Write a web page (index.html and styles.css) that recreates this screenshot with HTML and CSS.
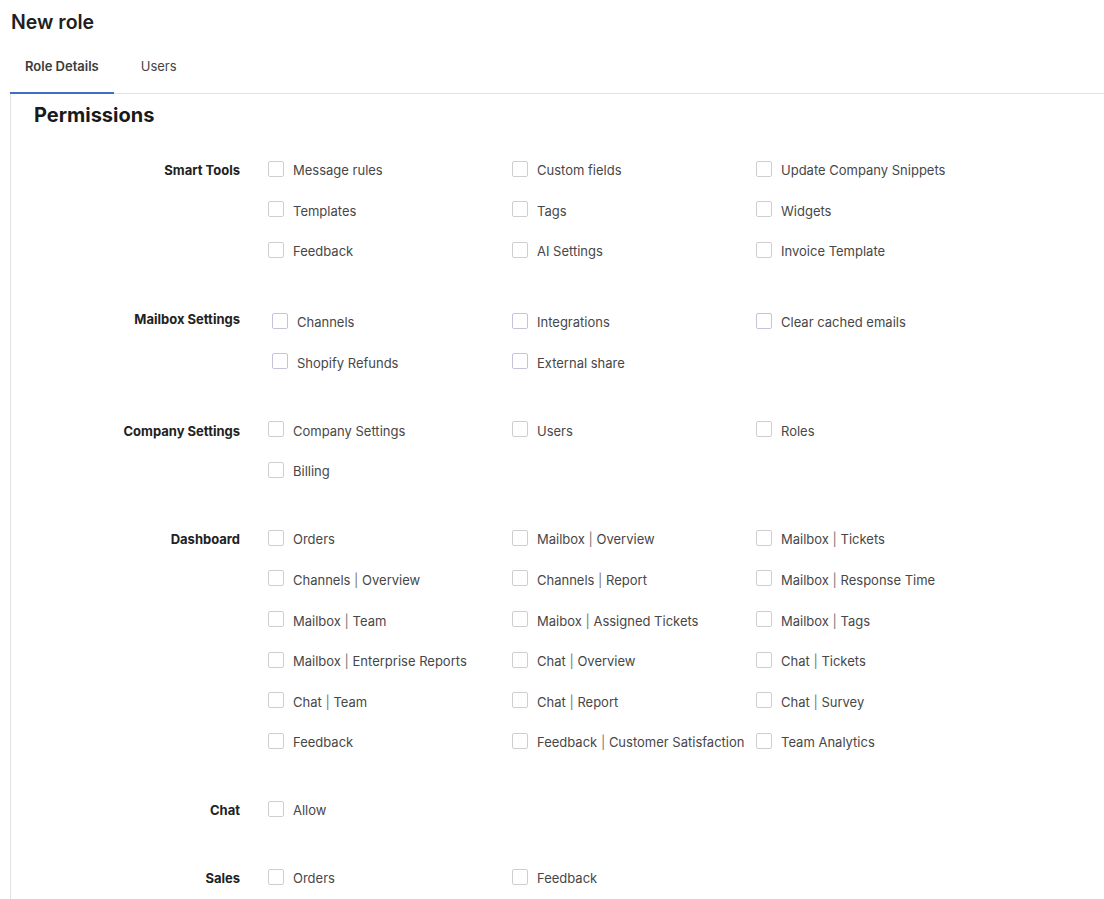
FILE: index.html
```html
<!DOCTYPE html>
<html>
<head>
<meta charset="utf-8">
<link rel="stylesheet" href="styles.css">
</head>
<body>
<h1 class="title">New role</h1>
<div class="tabs">
  <div class="tab active">Role Details</div>
  <div class="tab">Users</div>
</div>
<div class="content">
  <h2 class="section-title">Permissions</h2>
  <div class="groups">
    <div class="group">
      <div class="group-label">Smart Tools</div>
      <div class="options">
        <label class="opt"><span class="box"></span><span>Message rules</span></label>
        <label class="opt"><span class="box"></span><span>Custom fields</span></label>
        <label class="opt"><span class="box"></span><span>Update Company Snippets</span></label>
        <label class="opt"><span class="box"></span><span>Templates</span></label>
        <label class="opt"><span class="box"></span><span>Tags</span></label>
        <label class="opt"><span class="box"></span><span>Widgets</span></label>
        <label class="opt"><span class="box"></span><span>Feedback</span></label>
        <label class="opt"><span class="box"></span><span>AI Settings</span></label>
        <label class="opt"><span class="box"></span><span>Invoice Template</span></label>
      </div>
    </div>
    <div class="group group-legacy">
      <div class="group-label">Mailbox Settings</div>
      <div class="options">
        <label class="opt first"><span class="box"></span><span>Channels</span></label>
        <label class="opt"><span class="box"></span><span>Integrations</span></label>
        <label class="opt"><span class="box"></span><span>Clear cached emails</span></label>
        <label class="opt first"><span class="box"></span><span>Shopify Refunds</span></label>
        <label class="opt"><span class="box"></span><span>External share</span></label>
      </div>
    </div>
    <div class="group">
      <div class="group-label">Company Settings</div>
      <div class="options">
        <label class="opt"><span class="box"></span><span>Company Settings</span></label>
        <label class="opt"><span class="box"></span><span>Users</span></label>
        <label class="opt"><span class="box"></span><span>Roles</span></label>
        <label class="opt"><span class="box"></span><span>Billing</span></label>
      </div>
    </div>
    <div class="group">
      <div class="group-label">Dashboard</div>
      <div class="options">
        <label class="opt"><span class="box"></span><span>Orders</span></label>
        <label class="opt"><span class="box"></span><span>Mailbox <span class="sep">|</span> Overview</span></label>
        <label class="opt"><span class="box"></span><span>Mailbox <span class="sep">|</span> Tickets</span></label>
        <label class="opt"><span class="box"></span><span>Channels <span class="sep">|</span> Overview</span></label>
        <label class="opt"><span class="box"></span><span>Channels <span class="sep">|</span> Report</span></label>
        <label class="opt"><span class="box"></span><span>Mailbox <span class="sep">|</span> Response Time</span></label>
        <label class="opt"><span class="box"></span><span>Mailbox <span class="sep">|</span> Team</span></label>
        <label class="opt"><span class="box"></span><span>Maibox <span class="sep">|</span> Assigned Tickets</span></label>
        <label class="opt"><span class="box"></span><span>Mailbox <span class="sep">|</span> Tags</span></label>
        <label class="opt"><span class="box"></span><span>Mailbox <span class="sep">|</span> Enterprise Reports</span></label>
        <label class="opt"><span class="box"></span><span>Chat <span class="sep">|</span> Overview</span></label>
        <label class="opt"><span class="box"></span><span>Chat <span class="sep">|</span> Tickets</span></label>
        <label class="opt"><span class="box"></span><span>Chat <span class="sep">|</span> Team</span></label>
        <label class="opt"><span class="box"></span><span>Chat <span class="sep">|</span> Report</span></label>
        <label class="opt"><span class="box"></span><span>Chat <span class="sep">|</span> Survey</span></label>
        <label class="opt"><span class="box"></span><span>Feedback</span></label>
        <label class="opt"><span class="box"></span><span>Feedback <span class="sep">|</span> Customer Satisfaction</span></label>
        <label class="opt"><span class="box"></span><span>Team Analytics</span></label>
      </div>
    </div>
    <div class="group">
      <div class="group-label">Chat</div>
      <div class="options">
        <label class="opt"><span class="box"></span><span>Allow</span></label>
      </div>
    </div>
    <div class="group">
      <div class="group-label">Sales</div>
      <div class="options">
        <label class="opt"><span class="box"></span><span>Orders</span></label>
        <label class="opt"><span class="box"></span><span>Feedback</span></label>
      </div>
    </div>
  </div>
</div>
</body>
</html>
```

FILE: styles.css
```css
html, body {
  margin: 0;
  padding: 0;
  background: #fff;
}
body {
  font-family: Inter, "Noto Sans", sans-serif;
  color: #222;
}
.title {
  margin: 0;
  padding: 10px 0 0 11px;
  font-size: 19.5px;
  line-height: 24px;
  font-weight: 600;
  color: #1f1f1f;
}
.tabs {
  display: flex;
  margin: 6px 0 0 10px;
  border-bottom: 1px solid #e2e2e2;
}
.tab {
  padding: 16px 15px 16px;
  font-size: 13px;
  line-height: 20px;
  color: #444;
  margin-bottom: -1px;
  border-bottom: 2px solid transparent;
}
.tab + .tab {
  margin-left: 12px;
}
.tab.active {
  font-weight: 600;
  color: #3c3c3c;
  border-bottom-color: #3d6fc5;
}
.content {
  margin-left: 10px;
  border-left: 1px solid #e2e2e2;
  padding: 9px 0 40px 23px;
}
.section-title {
  margin: 0;
  font-size: 20px;
  line-height: 24px;
  font-weight: 700;
  color: #1a1a1a;
}
.groups {
  display: flex;
  flex-direction: column;
  gap: 44px;
  margin-top: 31px;
}
.group {
  display: flex;
  gap: 28px;
}
.group-label {
  width: 206px;
  flex: none;
  text-align: right;
  font-size: 13px;
  line-height: 24px;
  font-weight: 700;
  color: #222;
}
.options {
  display: grid;
  grid-template-columns: 244px 244px 244px;
  row-gap: 16.6px;
}
.opt {
  display: flex;
  align-items: center;
  height: 24px;
  font-size: 13px;
  color: #474747;
  white-space: nowrap;
}
.box {
  width: 14px;
  height: 14px;
  border: 1px solid #cfcfcf;
  border-radius: 2px;
  margin-right: 9px;
  margin-top: -3px;
  flex: none;
}
.sep {
  color: #777;
}
.group-legacy .options {
  margin-top: 3px;
}
.group-legacy .opt.first {
  padding-left: 4px;
}
.group-legacy .box {
  border-color: #c3c3d9;
}
```
